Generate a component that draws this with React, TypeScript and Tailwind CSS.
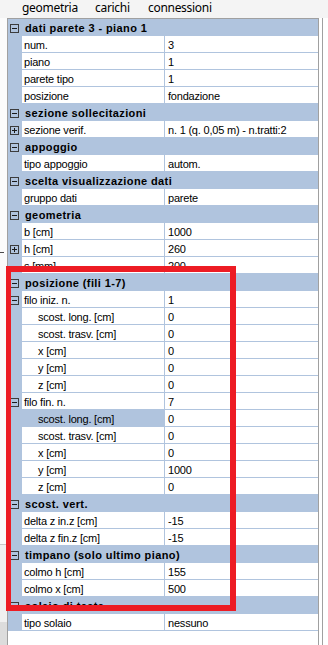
import type { ReactNode } from 'react';

type GridRow = {
  kind?: 'cat' | 'item';
  label: string;
  value?: string;
  glyph?: 'plus' | 'minus';
  indent?: boolean;
  selected?: boolean;
};

const rows: GridRow[] = [
  { kind: 'cat', label: 'dati parete 3 - piano 1' },
  { label: 'num.', value: '3' },
  { label: 'piano', value: '1' },
  { label: 'parete tipo', value: '1' },
  { label: 'posizione', value: 'fondazione' },
  { kind: 'cat', label: 'sezione sollecitazioni' },
  { label: 'sezione verif.', value: 'n. 1 (q. 0,05 m) - n.tratti:2', glyph: 'plus' },
  { kind: 'cat', label: 'appoggio' },
  { label: 'tipo appoggio', value: 'autom.' },
  { kind: 'cat', label: 'scelta visualizzazione dati' },
  { label: 'gruppo dati', value: 'parete' },
  { kind: 'cat', label: 'geometria' },
  { label: 'b [cm]', value: '1000' },
  { label: 'h [cm]', value: '260', glyph: 'plus' },
  { label: 's [mm]', value: '200' },
  { kind: 'cat', label: 'posizione (fili 1-7)' },
  { label: 'filo iniz. n.', value: '1', glyph: 'minus' },
  { label: 'scost. long. [cm]', value: '0', indent: true },
  { label: 'scost. trasv. [cm]', value: '0', indent: true },
  { label: 'x [cm]', value: '0', indent: true },
  { label: 'y [cm]', value: '0', indent: true },
  { label: 'z [cm]', value: '0', indent: true },
  { label: 'filo fin. n.', value: '7', glyph: 'minus' },
  { label: 'scost. long. [cm]', value: '0', indent: true, selected: true },
  { label: 'scost. trasv. [cm]', value: '0', indent: true },
  { label: 'x [cm]', value: '0', indent: true },
  { label: 'y [cm]', value: '1000', indent: true },
  { label: 'z [cm]', value: '0', indent: true },
  { kind: 'cat', label: 'scost. vert.' },
  { label: 'delta z in.z [cm]', value: '-15' },
  { label: 'delta z fin.z [cm]', value: '-15' },
  { kind: 'cat', label: 'timpano (solo ultimo piano)' },
  { label: 'colmo h [cm]', value: '155' },
  { label: 'colmo x [cm]', value: '500' },
  { kind: 'cat', label: 'solaio di testa' },
  { label: 'tipo solaio', value: 'nessuno' },
];

function Glyph({ type }: { type: 'plus' | 'minus' }) {
  return (
    <div className="relative ml-[2px] mt-[5px] h-[9px] w-[9px] border border-[#3c3c3c]">
      <div className="absolute left-[1px] top-[3px] h-[1px] w-[5px] bg-[#1a1a1a]" />
      {type === 'plus' && (
        <div className="absolute left-[3px] top-[1px] h-[5px] w-[1px] bg-[#1a1a1a]" />
      )}
    </div>
  );
}

function Margin({ children }: { children?: ReactNode }) {
  return <div className="flex h-[17px] w-[14px] shrink-0">{children}</div>;
}

function renderRow(row: GridRow, i: number) {
  if (row.kind === 'cat') {
    return (
      <div className="flex h-[17px]" key={i}>
        <Margin>
          <Glyph type="minus" />
        </Margin>
        <div className="h-[17px] flex-1 truncate whitespace-nowrap pl-[3px] pt-[2px] font-bold text-[11px] leading-[14px] tracking-[0.4px] text-black">
          {row.label}
        </div>
      </div>
    );
  }

  return (
    <div className="flex h-[17px]" key={i}>
      <Margin>{row.glyph && <Glyph type={row.glyph} />}</Margin>
      <div
        className={`h-[16px] w-[142px] shrink-0 overflow-hidden whitespace-nowrap pt-[2px] text-[11px] leading-[14px] tracking-[-0.2px] text-black ${
          row.indent ? 'pl-[16px]' : 'pl-[2px]'
        } ${row.selected ? 'bg-[#b0c4de]' : 'bg-white'}`}
      >
        {row.label}
      </div>
      <div className="ml-[1px] h-[16px] flex-1 overflow-hidden whitespace-nowrap bg-white pl-[3px] pt-[2px] text-[11px] leading-[14px] tracking-[-0.2px] text-black">
        {row.value}
      </div>
    </div>
  );
}

export default function App() {
  return (
    <div className="relative h-[645px] w-[328px] overflow-hidden bg-white">
      {/* menu */}
      <div
        className="flex h-[18px] bg-[#f4f4f4] text-[12px] leading-[16.5px] tracking-[-0.3px] text-black"
        style={{ fontFamily: '"Noto Sans", sans-serif' }}
      >
        <span className="ml-[22px] w-[73px]">geometria</span>
        <span className="w-[53px]">carichi</span>
        <span>connessioni</span>
      </div>

      <div className="flex h-[627px]" style={{ fontFamily: '"Liberation Sans", Arial, sans-serif' }}>
        <div className="flex w-[7px] flex-col">
          <div className="h-[234px] bg-[#fbfbfb]" />
          <div className="h-[1px] w-[4px] bg-[#4a4a4a]" />
          <div className="h-[291px] bg-[#fbfbfb]" />
          <div className="h-[1px] bg-[#c8c8c8]" />
          <div className="h-[77px] bg-[#f0f0f0]" />
          <div className="flex-1 bg-[#dcdcdc]" />
        </div>

        <div className="w-[312px] border border-b-0 border-[#a0a0a0] bg-white">
          <div className="bg-[#b0c4de]">{rows.map(renderRow)}</div>
        </div>

        <div className="ml-[3px] w-[1px] border-t border-[#a0a0a0] bg-[#a0a0a0]" />
      </div>

      {/* red highlight */}
      <div className="absolute left-[6px] top-[266px] h-[345px] w-[230px] border-[6px] border-l-[5px] border-[#ed1c24]" />
    </div>
  );
}
